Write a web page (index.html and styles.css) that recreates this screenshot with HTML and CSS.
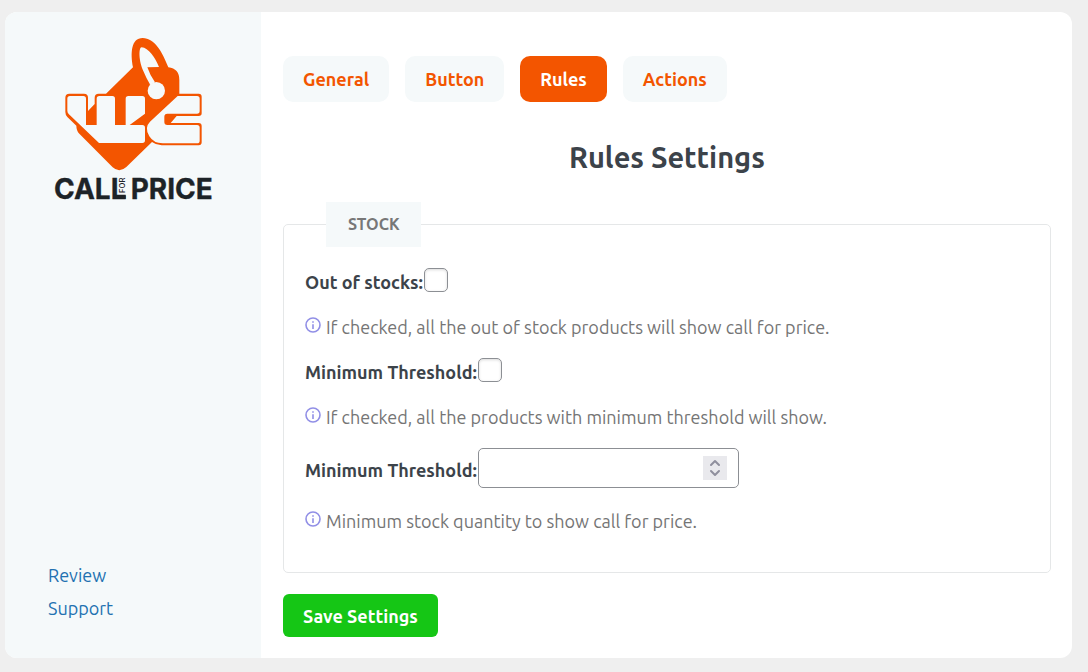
FILE: index.html
```html
<!DOCTYPE html>
<html lang="en">
<head>
<meta charset="utf-8">
<meta name="viewport" content="width=device-width, initial-scale=1">
<title>Rules Settings</title>
<link rel="stylesheet" href="styles.css">
</head>
<body>
<div class="panel">
  <aside class="sidebar">
    <svg class="logo" viewBox="0 0 510 525" role="img" aria-label="WC Call for Price">
      <path class="logo-tag" d="M168 191L249 112C241 70 243 24 278 24C314 24 337 66 355 112Q388 116 388 150V191H446Q455 191 455 200V250Q455 258 446 258H380L362 279H446Q455 279 455 288V337Q455 346 446 346H335Q318 345 306 336L229 411Q208 430 188 412L88 311Q79 302 79 287L52 261Q46 255 46 246V203Q46 191 58 191H102Q114 191 114 203V243L134 222V203Q134 191 146 191Z"/>
      <path class="logo-cut" d="M52 206Q52 198 60 198H100Q108 198 108 206V285H140V206Q140 198 148 198H187Q195 198 195 206V285H227V206Q227 198 235 198H277Q285 198 285 206V251L239 285H277Q285 285 285 293V331Q285 339 277 339H147L56 252Q52 248 52 242Z"/>
      <path class="logo-cut" d="M383 198H441Q449 198 449 206V243Q449 251 441 251H352Q343 251 343 260V276Q343 285 352 285H441Q449 285 449 293V332Q449 340 441 340H338Q311 340 298 319Q282 293 300 275Z"/>
      <path class="logo-cut" d="M275 52C266 51 265 92 281 125Q289 145 301 165L315 157Q300 136 292 112L327 111C316 83 295 53 275 52Z"/>
      <circle class="logo-cut" cx="319" cy="182" r="26"/>
      <text class="logo-word" x="12" y="506">CALL</text>
      <path class="logo-ink" d="M196 494H227V506H196Z"/>
      <text class="logo-for" transform="translate(224 489) rotate(-90)">FOR</text>
      <text class="logo-word" x="242" y="506">PRICE</text>
    </svg>
    <nav class="side-links" aria-label="Help">
      <a href="#review">Review</a>
      <a href="#support">Support</a>
    </nav>
  </aside>
  <main class="content">
    <nav class="tabs" aria-label="Settings sections">
      <a class="tab" href="#general">General</a>
      <a class="tab" href="#button">Button</a>
      <a class="tab tab-active" href="#rules" aria-current="page">Rules</a>
      <a class="tab" href="#actions">Actions</a>
    </nav>
    <h1 class="title">Rules Settings</h1>
    <form class="form">
      <fieldset class="group">
        <legend class="legend">STOCK</legend>
        <div class="field">
          <label class="label" for="out-of-stock">Out of stocks:</label>
          <input class="check" type="checkbox" id="out-of-stock">
        </div>
        <p class="hint"><svg class="info" viewBox="0 0 16 16" aria-hidden="true"><circle cx="8" cy="8" r="7"/><path d="M8 7.3V12M8 4.3V5.8"/></svg>If checked, all the out of stock products will show call for price.</p>
        <div class="field">
          <label class="label" for="use-threshold">Minimum Threshold:</label>
          <input class="check" type="checkbox" id="use-threshold">
        </div>
        <p class="hint"><svg class="info" viewBox="0 0 16 16" aria-hidden="true"><circle cx="8" cy="8" r="7"/><path d="M8 7.3V12M8 4.3V5.8"/></svg>If checked, all the products with minimum threshold will show.</p>
        <div class="field">
          <label class="label" for="threshold">Minimum Threshold:</label>
          <span class="number-wrap">
            <input class="number" type="number" id="threshold">
            <svg class="spinner" viewBox="0 0 24 24" aria-hidden="true"><path d="M8 9L12 5L16 9M8 15L12 19L16 15"/></svg>
          </span>
        </div>
        <p class="hint hint-last"><svg class="info" viewBox="0 0 16 16" aria-hidden="true"><circle cx="8" cy="8" r="7"/><path d="M8 7.3V12M8 4.3V5.8"/></svg>Minimum stock quantity to show call for price.</p>
      </fieldset>
      <button class="save" type="button">Save Settings</button>
    </form>
  </main>
</div>
</body>
</html>
```
FILE: styles.css
```css
* { box-sizing: border-box; }
body {
  margin: 0;
  padding: 12px 16px 14px 5px;
  min-height: 100vh;
  display: flex;
  background: #efefef;
  color: #3c434a;
  font-family: Ubuntu, "Noto Sans", sans-serif;
  font-size: 18px;
  line-height: 24px;
}
.panel {
  flex: 1;
  display: flex;
  background: #fff;
  border-radius: 12px;
  overflow: hidden;
}
.sidebar {
  flex: 0 0 256px;
  display: flex;
  flex-direction: column;
  justify-content: space-between;
  padding: 18px 41px 38px 43px;
  background: #f5f9fa;
}
.logo { width: 170px; height: 175px; margin-left: 2px; }
.logo-tag { fill: #f35500; }
.logo-cut { fill: #f5f9fa; }
.logo-ink { fill: #1d2327; }
.logo-word { font: 700 84px Inter, sans-serif; fill: #1d2327; stroke: #1d2327; stroke-width: 1; }
.logo-for { font: 500 23px Inter, sans-serif; fill: #1d2327; }
.side-links { display: flex; flex-direction: column; gap: 9px; }
.side-links a { color: #2271b1; text-decoration: none; }
.content { flex: 1; padding: 44px 21px 21px 22px; }
.tabs { display: flex; gap: 16px; }
.tab {
  padding: 11px 20px;
  border-radius: 10px;
  background: #f5f9fa;
  color: #f35500;
  font-weight: 700;
  text-decoration: none;
}
.tab-active { background: #f35500; color: #fff; }
.title {
  margin: 37px 0 27px;
  font-size: 29px;
  line-height: 36px;
  text-align: center;
}
.group {
  min-width: 0;
  margin: 0 0 21px;
  padding: 21px 21px 39px;
  border: 1px solid #e5e7e8;
  border-radius: 5px;
}
.legend {
  margin-left: 21px;
  padding: 10px 21px 11px 22px;
  background: #f5f9fa;
  color: #777;
  font-size: 16px;
  font-weight: 700;
}
.field { display: flex; align-items: center; gap: 1px; }
.label { padding-top: 4px; line-height: 20px; font-weight: 700; }
.check {
  appearance: none;
  width: 24px;
  height: 24px;
  margin: 0;
  border: 1px solid #8c8f94;
  border-radius: 5px;
  background: #fff;
  box-shadow: inset 0 1px 3px rgba(0, 0, 0, .15);
}
.hint { margin: 23px 0 19px; display: flex; gap: 5px; color: #757575; }
.hint-last { margin: 21px 0 0; }
.info { flex: none; width: 16px; height: 16px; margin-top: 2px; fill: none; stroke: #918fe6; stroke-width: 1.6; }
.number-wrap { position: relative; display: flex; width: 261px; }
.number {
  appearance: textfield;
  width: 100%;
  height: 40px;
  padding: 0 40px 0 11px;
  border: 1px solid #8c8f94;
  border-radius: 5px;
  background: #fff;
  font: inherit;
}
.number::-webkit-inner-spin-button { appearance: none; margin: 0; }
.spinner {
  position: absolute;
  right: 12px;
  top: 8px;
  width: 24px;
  height: 24px;
  background: #e9e9ed;
  fill: none;
  stroke: #8f8f9d;
  stroke-width: 2;
  stroke-linecap: round;
  stroke-linejoin: round;
  pointer-events: none;
}
.save {
  display: block;
  padding: 10px 20px 9px;
  border: 0;
  border-radius: 6px;
  background: #15c615;
  color: #fff;
  font: inherit;
  font-weight: 700;
}
```
